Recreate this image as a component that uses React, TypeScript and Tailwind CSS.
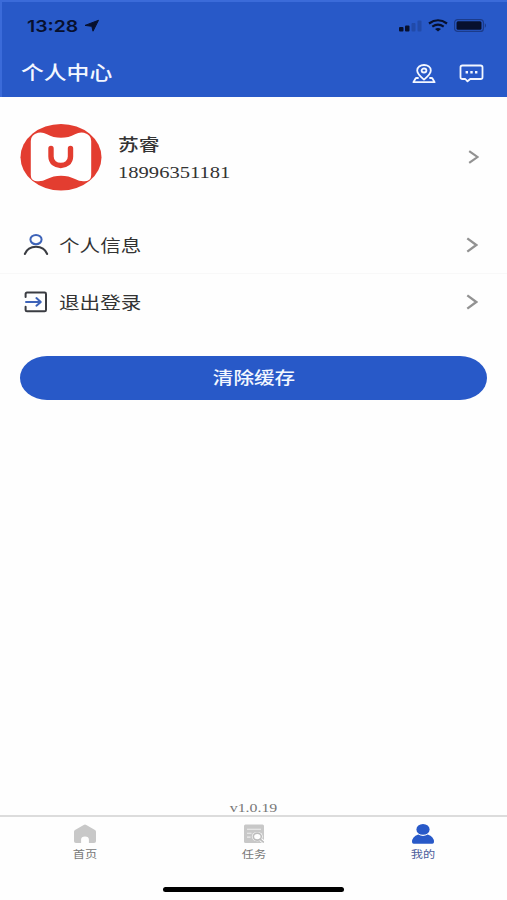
import type React from "react";

interface MenuItem {
  label: string;
  icon: React.ReactNode;
}

interface Tab {
  label: string;
  icon: React.ReactNode;
  active?: boolean;
}

const menu: MenuItem[] = [
  {
    label: "个人信息",
    icon: (
      <svg width="26" height="22" viewBox="0 0 26 22" fill="none" strokeWidth="2" strokeLinecap="round">
        <ellipse cx="13" cy="5.6" rx="5.6" ry="4.6" stroke="#3d63b8" />
        <path d="M1.8 20C3.6 15.6 7.8 12.8 13 12.8S22.4 15.6 24.2 20" stroke="#3a3c42" />
      </svg>
    ),
  },
  {
    label: "退出登录",
    icon: (
      <svg width="26" height="22" viewBox="0 0 26 22" fill="none" strokeWidth="2" strokeLinecap="round" strokeLinejoin="round">
        <path d="M2.6 6V2.9Q2.6 1.6 4 1.6H21.6Q23 1.6 23 2.9V18.9Q23 20.2 21.6 20.2H4Q2.6 20.2 2.6 18.9V15.8" stroke="#3a3c42" />
        <path d="M3 10.9H17.5M13.4 7.1L17.8 10.9L13.4 14.7" stroke="#3d63b8" />
      </svg>
    ),
  },
];

const tabs: Tab[] = [
  {
    label: "首页",
    icon: (
      <svg width="24" height="20" viewBox="0 0 24 20" fill="#c8c8c8">
        <path d="M10.7 .9Q12 .1 13.3 .9L22 6.1Q23 6.7 23 7.8V17.2Q23 19 21 19H15.9V15.5Q15.9 12.6 12 12.6T8.1 15.5V19H3Q1 19 1 17.2V7.8Q1 6.7 2 6.1Z" />
      </svg>
    ),
  },
  {
    label: "任务",
    icon: (
      <svg width="24" height="20" viewBox="0 0 24 20" fill="none">
        <rect x="2" y=".5" width="20" height="18.5" rx="1.5" fill="#c8c8c8" />
        <path d="M5 5.2H19M5 9.3H9.500M5 13.1H8.500" stroke="#eee" strokeWidth="1.1" />
        <ellipse cx="15.3" cy="12.6" rx="5.4" ry="4.700" fill="#fff" />
        <path d="M18.7 15.7L21.8 18.2" stroke="#fff" strokeWidth="3.600" />
        <ellipse cx="15.3" cy="12.6" rx="4" ry="3.500" fill="#fff" stroke="#bdbdbd" strokeWidth="1.600" />
        <path d="M18.300 15.300L21.200 17.900" stroke="#bdbdbd" strokeWidth="1.800" strokeLinecap="round" />
      </svg>
    ),
  },
  {
    label: "我的",
    active: true,
    icon: (
      <svg width="24" height="20" viewBox="0 0 24 20" fill="#2859c8">
        <ellipse cx="12" cy="5.4" rx="6.6" ry="5.4" />
        <path d="M7.2 10.5Q12 13.3 16.8 10.5Q23 12.7 23 18Q23 19.8 21.3 19.8H2.7Q1 19.8 1 18Q1 12.7 7.2 10.5Z" />
      </svg>
    ),
  },
];

function Chevron({ className }: { className: string }) {
  return (
    <svg className={className} viewBox="0 0 12 16" fill="none" preserveAspectRatio="none">
      <path d="M1.3 1.3L10.3 8L1.3 14.7" stroke="#929292" strokeWidth="2.3" />
    </svg>
  );
}

function StatusBar() {
  return (
    <div className="flex h-[50px] items-center pl-[27px] pr-[20px] pt-px text-[#07102e]">
      <span className="w-[57px] font-['Inter'] text-base font-semibold">
        <span className="inline-block origin-left scale-x-[1.21]">13:28</span>
      </span>
      <svg width="16" height="14" viewBox="0 0 16 14" fill="currentColor" stroke="currentColor" strokeLinejoin="round">
        <path d="M14.5 1.3L9 12.2L7.8 7.3L1 6.4Z" />
      </svg>
      <div className="ml-auto flex items-center gap-[6px]">
        <svg width="23" height="12" viewBox="0 0 23 12" fill="currentColor">
          <rect x="0" y="7" width="4.5" height="4.5" rx="1" />
          <rect x="6" y="5.5" width="4.5" height="6" rx="1" />
          <rect x="12.5" y="3" width="4" height="8.5" rx="1" opacity=".2" />
          <rect x="18.5" y=".5" width="4" height="11" rx="1" opacity=".2" />
        </svg>
        <svg width="20" height="13" viewBox="0 0 20 13" fill="none" stroke="currentColor" strokeWidth="2.2">
          <path d="M1 4.5Q10-2 19 4.5M4.3 7.7Q10 3.7 15.7 7.7" />
          <path d="M7 10Q10 8.2 13 10L10 12.5Z" fill="currentColor" stroke="none" />
        </svg>
        <svg width="33" height="13" viewBox="0 0 33 13" fill="currentColor">
          <rect x=".6" y=".6" width="28.8" height="11.8" rx="3" fill="none" stroke="currentColor" strokeWidth="1.2" opacity=".4" />
          <rect x="2.5" y="2.2" width="25" height="8.6" rx="1.5" />
          <path d="M30.8 4Q33 6.5 30.8 9Z" opacity=".45" />
        </svg>
      </div>
    </div>
  );
}

function TitleBar() {
  return (
    <div className="flex h-[47px] items-center pl-[21px] pr-[23px] text-[#f3f7ff]">
      <h1 className="origin-left scale-x-[1.2] pt-[2px] text-[19px] font-medium">个人中心</h1>
      <div className="ml-auto flex items-center gap-[23px]">
        <svg width="24" height="20" viewBox="0 0 24 20" fill="none" stroke="currentColor" strokeWidth="1.8" strokeLinejoin="round" strokeLinecap="round">
          <path d="M12 15.6C8.5 12.5 5.2 9.8 5.2 6.4C5.2 3.2 8.2 1 12 1S18.8 3.2 18.8 6.4C18.8 9.800 15.500 12.500 12 15.600Z" />
          <ellipse cx="12" cy="6.500" rx="2.400" ry="2" />
          <path d="M6 14H4.600Q3.800 14 3.400 14.700L1.400 18.200H22.600L20.600 14.700Q20.200 14 19.400 14H18" />
        </svg>
        <svg width="25" height="19" viewBox="0 0 25 19" fill="none" stroke="currentColor" strokeWidth="1.8" strokeLinejoin="round">
          <path d="M3.5 1.5H21.5Q23.5 1.5 23.5 3.3V13.2Q23.5 15 21.5 15H11.2L8.5 17.3L6.3 15H3.5Q1.5 15 1.5 13.2V3.3Q1.5 1.5 3.5 1.5Z" />
          <path d="M6.6 8.3H9M11.3 8.3H13.7M16 8.3H18.4" strokeWidth="2.4" />
        </svg>
      </div>
    </div>
  );
}

function Avatar() {
  return (
    <svg width="82" height="68" viewBox="0 0 82 68">
      <ellipse cx="41" cy="34.3" rx="40.5" ry="33.3" fill="#e33d30" />
      <path
        d="M18 9.800Q22.500 8.800 27 11.300C35 16 47 16 55 11.300Q59.500 8.800 64 9.800Q71 11.500 71.200 18V52Q71.200 57.800 65 58.200Q60 58.800 55 56C47 51.500 35 51.500 27 56Q22 58.800 17 58.200Q10.800 57.800 10.800 52V18Q11 11.500 18 9.800Z"
        fill="#fff"
      />
      <path d="M31 25.500V33.500C31 45.500 50.500 45.500 50.500 33.500V25.500" fill="none" stroke="#e33d30" strokeWidth="5.4" strokeLinecap="round" />
    </svg>
  );
}

export default function App() {
  return (
    <div className="flex h-[900px] w-[507px] flex-col overflow-hidden bg-[#fefefe] font-['Liberation_Sans','Noto_Sans_CJK_SC',sans-serif] text-[#333]">
      <header className="h-[97px] bg-[#2859c8] shadow-[inset_2px_2px_0_#3b6bd9]">
        <StatusBar />
        <TitleBar />
      </header>

      <main className="flex flex-1 flex-col">
        <section className="flex h-[120px] items-center pl-[20px] pr-[28px]">
          <Avatar />
          <div className="ml-[16px] flex flex-col pt-[3px]">
            <span className="origin-left scale-x-[1.22] text-[17px] leading-[27px] font-medium">苏睿</span>
            <span className="origin-left scale-x-[1.21] font-['Liberation_Serif',serif] text-[17px] leading-[27px]">18996351181</span>
          </div>
          <Chevron className="ml-auto h-[14px] w-[11px]" />
        </section>

        <section className="flex flex-col">
          {menu.map((item, idx) => (
            <div key={idx} className="flex h-[57px] items-center border-b border-[#f8f8f8] pl-[23px] pr-[29px] last:h-[56px] last:border-0">
              {item.icon}
              <span className="ml-[10px] origin-left scale-x-[1.21] pt-[3px] text-[17px]">{item.label}</span>
              <Chevron className="ml-auto h-[16px] w-[12px]" />
            </div>
          ))}
        </section>

        <button className="mx-[20px] mt-[26px] h-[44px] rounded-[27px/22px] bg-[#2859c8] pt-[2px] text-[17px] font-medium text-[#f3f7ff]">
          <span className="inline-block scale-x-[1.21]">清除缓存</span>
        </button>

        <p className="mt-auto text-center font-['Liberation_Serif',serif] text-[13px] leading-[15px] text-[#777]">
          <span className="inline-block scale-x-[1.22]">v1.0.19</span>
        </p>
      </main>

      <footer className="h-[85px] border-t-2 border-[#dcdcdc]">
        <nav className="flex h-[64px] pt-[7px]">
          {tabs.map((tab, idx) => (
            <div key={idx} className="flex flex-1 flex-col items-center">
              {tab.icon}
              <span
                className={`mt-[3px] scale-x-[1.22] text-[10px] leading-[15px] ${
                  tab.active ? "text-[#4d5d9c]" : "text-[#777]"
                }`}
              >
                {tab.label}
              </span>
            </div>
          ))}
        </nav>
        <div className="mx-auto mt-[6px] h-[5px] w-[181px] rounded-full bg-black" />
      </footer>
    </div>
  );
}
